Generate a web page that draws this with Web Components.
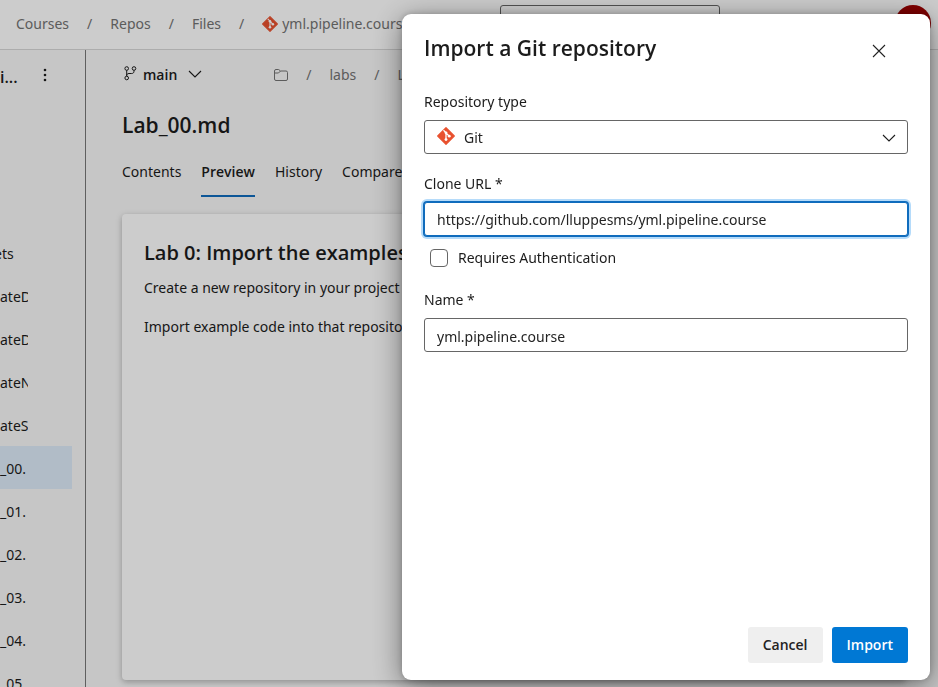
<!DOCTYPE html>
<html lang="en">
<head>
<meta charset="utf-8">
<title>Import a Git repository</title>
<style>
html, body { height: 100%; }
body { margin: 0; overflow: hidden; font: 14px/20px "Noto Sans", "Open Sans", sans-serif; color: #1c1c1c; background: #f8f8f8; --strong: "Open Sans", "Noto Sans", sans-serif; }
</style>
</head>
<body>
<repo-app></repo-app>
<script>
const gitLogo = `<svg viewBox="0 0 20 20" aria-hidden="true"><path d="M10 .8 19.2 10 10 19.2.8 10z" fill="#e8512f" stroke="#e8512f" stroke-width="1.4" stroke-linejoin="round"/><path d="M7.2 3.6 10 6.4V14.2M10 6.6l3.7 3.7" fill="none" stroke="#fff" stroke-width="1.4"/><circle cx="10" cy="6.5" r="1.6" fill="#fff"/><circle cx="10" cy="14" r="1.6" fill="#fff"/><circle cx="13.6" cy="10.2" r="1.6" fill="#fff"/></svg>`;
const chevron = `<svg viewBox="0 0 14 14" width="14" height="14" fill="none" stroke="currentColor" stroke-width="1.1" aria-hidden="true"><path d="M1 4l6 6 6-6"/></svg>`;

function define(name, html) {
  const template = document.createElement('template');
  template.innerHTML = html;
  customElements.define(name, class extends HTMLElement {
    constructor() {
      super();
      this.attachShadow({ mode: 'open' }).append(template.content.cloneNode(true));
    }
  });
}

define('git-logo', `<style>:host{display:inline-flex;width:18px;height:18px}svg{width:100%;height:100%}</style>${gitLogo}`);

define('path-trail', `<style>
:host{display:flex;align-items:center;gap:18px;color:#737373;white-space:nowrap;min-width:0}
::slotted(a){color:inherit;text-decoration:none;display:flex;align-items:center;gap:4px}
</style><slot></slot>`);

define('top-bar', `<style>
:host{display:grid;grid-template-columns:484px 220px 1fr;box-sizing:border-box;height:50px;padding:0 7px 3px 16px;align-items:center;background:#fff;border-bottom:1px solid #d8d8d8}
input{box-sizing:border-box;width:100%;height:36px;border:1px solid #666;border-radius:3px;background:transparent}
.avatar{justify-self:end;width:36px;height:36px;border-radius:50%;border:0;padding:0;background:#a00000}
path-trail{padding-top:2px}
git-logo{width:16px;height:16px}
</style>
<path-trail><a href="#courses">Courses</a><span>/</span><a href="#repos">Repos</a><span>/</span><a href="#files">Files</a><span>/</span><a href="#repo"><git-logo></git-logo>yml.pipeline.course</a></path-trail>
<input type="search" aria-label="Search">
<button class="avatar" aria-label="Account"></button>`);

define('file-row', `<style>
:host{display:flex;align-items:center;height:43px;margin-right:13px;padding-top:2px;box-sizing:border-box}
:host([selected]){background:#deecf9}
span{display:block;width:28px;overflow:hidden;white-space:nowrap}
::slotted(a){color:inherit;text-decoration:none}
</style><span><slot></slot></span>`);

define('file-tree', `<style>
:host{display:block;border-right:1px solid #777;overflow:hidden}
header{display:flex;justify-content:space-between;align-items:center;height:50px;padding-right:38px;margin-bottom:131px}
h2{margin:0;padding-top:4px;font:600 16px/20px var(--strong)}
button{border:0;background:none;padding:0;display:flex}
.cut{margin-left:-6px}
</style>
<header><h2>i...</h2><button aria-label="More options"><svg width="4" height="14" viewBox="0 0 4 14" fill="#1c1c1c"><circle cx="2" cy="2" r="1.3"/><circle cx="2" cy="7" r="1.3"/><circle cx="2" cy="12" r="1.3"/></svg></button></header>
<nav>
<file-row><a class="cut" href="#1">ets</a></file-row><file-row><a href="#2">ateD</a></file-row><file-row><a href="#3">ateD</a></file-row><file-row><a href="#4">ateN</a></file-row><file-row><a href="#5">ateS</a></file-row>
<file-row selected><a href="#6">_00.</a></file-row><file-row><a href="#7">_01.</a></file-row><file-row><a href="#8">_02.</a></file-row><file-row><a href="#9">_03.</a></file-row><file-row><a href="#10">_04.</a></file-row><file-row><a href="#11">_05.</a></file-row>
</nav>`);

define('branch-bar', `<style>
:host{display:flex;align-items:center;gap:72px;height:50px}
button{display:flex;align-items:center;gap:6px;border:0;background:none;padding:0 0 0 2px;font:600 14px/20px var(--strong);color:inherit}
button svg:first-child{margin-bottom:4px}
button svg:last-child{margin-left:5px;margin-bottom:2px}
</style>
<button><svg width="13" height="15" viewBox="0 0 13 15" fill="none" stroke="currentColor" aria-hidden="true"><circle cx="2.7" cy="2.5" r="1.8"/><circle cx="10" cy="2.5" r="1.8"/><circle cx="2.7" cy="12" r="1.8"/><path d="M2.7 4.3v5.9M10 4.3v.9c0 1.6-1 2.3-2.3 2.3H5c-1.5 0-2.3.8-2.3 2"/></svg>main${chevron}</button>
<path-trail><a href="#root" aria-label="Root folder"><svg width="14" height="12" viewBox="0 0 14 12" fill="none" stroke="currentColor"><path d="M.5 2Q.5 .5 2 .5H4.7L6.5 2H12Q13.5 2 13.5 3.5V10Q13.5 11.5 12 11.5H2Q.5 11.5 .5 10ZM.5 4H4.5L6.5 2"/></svg></a><span>/</span><a href="#labs">labs</a><span>/</span><a href="#file">Lab_00.md</a></path-trail>`);

define('view-tabs', `<style>
:host{display:flex;gap:20px}
::slotted(a){color:inherit;text-decoration:none;padding:8px 0 13px;border-bottom:2px solid transparent}
::slotted(a[aria-current]){font-family:var(--strong);font-weight:600;border-color:#0f6cbd}
</style><slot></slot>`);

define('preview-card', `<style>
:host{display:block;flex:1;box-sizing:border-box;padding:25px 22px;background:#fff;border-radius:4px;box-shadow:0 2px 6px rgba(0,0,0,.28)}
::slotted(h2){margin:0;font:600 20px/28px var(--strong)}
::slotted(p){margin:11px 0 19px}
</style><slot></slot>`);

define('file-view', `<style>
:host{display:flex;flex-direction:column;box-sizing:border-box;padding:0 32px 7px 36px;min-width:0;white-space:nowrap}
h1{margin:11px 0 15px;font:600 21px/28px var(--strong)}
view-tabs{margin-bottom:17px}
</style>
<branch-bar></branch-bar>
<h1>Lab_00.md</h1>
<view-tabs><a href="#contents">Contents</a><a href="#preview" aria-current="page">Preview</a><a href="#history">History</a><a href="#compare">Compare</a></view-tabs>
<preview-card><h2>Lab 0: Import the examples</h2><p>Create a new repository in your project</p><p>Import example code into that repository</p></preview-card>`);

define('import-dialog', `<style>
:host{display:flex;flex-direction:column;box-sizing:border-box;width:528px;max-width:100%;padding:20px 22px 17px;background:#fff;border-radius:9px;box-shadow:0 6px 30px rgba(0,0,0,.45),0 0 6px rgba(0,0,0,.2)}
header{display:flex;justify-content:space-between;align-items:center;margin-bottom:30px}
h1{margin:0;font:600 21px/28px var(--strong)}
.close{display:flex;border:0;background:none;padding:6px 0 0;margin-right:22px;color:#222}
label{display:block}
.label{margin-bottom:8px}
input[type=text],select{display:block;box-sizing:border-box;width:100%;height:34px;border:1px solid #666;border-radius:3px;background:#fff;color:#242424;font:inherit;padding:2px 12px 0;outline:0}
.pick{position:relative;margin-bottom:20px}
select{appearance:none;padding-left:39px}
.pick git-logo{position:absolute;left:13px;top:7px}
.pick svg{position:absolute;right:12px;top:11px;pointer-events:none}
#url{padding-top:0;border-color:#0f6cbd;box-shadow:0 0 0 1px #0f6cbd,0 0 0 3px #b5dbfa}
.check{display:flex;align-items:center;gap:10px;padding-left:6px;margin:12px 0 22px}
.check input{appearance:none;box-sizing:border-box;width:18px;height:18px;margin:0;border:1px solid #666;border-radius:4px}
footer{display:flex;justify-content:flex-end;gap:9px;margin-top:auto}
footer button{height:36px;padding:0 15px;border:0;border-radius:3px;background:#efefef;color:#222;font:600 14px/20px var(--strong)}
footer .primary{background:#0078d4;color:#fff}
</style>
<header><h1>Import a Git repository</h1><button class="close" aria-label="Close"><svg width="14" height="14" viewBox="0 0 14 14" stroke="currentColor" stroke-width="1.1"><path d="M1 1l12 12M13 1L1 13"/></svg></button></header>
<label class="label" for="type">Repository type</label>
<div class="pick"><select id="type"><option>Git</option></select><git-logo></git-logo>${chevron}</div>
<label class="label" for="url">Clone URL *</label>
<input type="text" id="url" value="https://github.com/lluppesms/yml.pipeline.course">
<label class="check"><input type="checkbox">Requires Authentication</label>
<label class="label" for="name">Name *</label>
<input type="text" id="name" value="yml.pipeline.course">
<footer><button>Cancel</button><button class="primary">Import</button></footer>`);

define('modal-layer', `<style>
:host{position:fixed;inset:0;display:flex;justify-content:flex-end;box-sizing:border-box;padding:14px 8px 7px;background:rgba(0,0,0,.2)}
</style><slot></slot>`);

define('repo-app', `<style>
:host{display:grid;grid-template-rows:auto 1fr;height:100%}
main{display:grid;grid-template-columns:86px 1fr;min-height:0}
</style>
<top-bar></top-bar>
<main><file-tree></file-tree><file-view></file-view></main>
<modal-layer><import-dialog role="dialog" aria-label="Import a Git repository"></import-dialog></modal-layer>`);
</script>
</body>
</html>
